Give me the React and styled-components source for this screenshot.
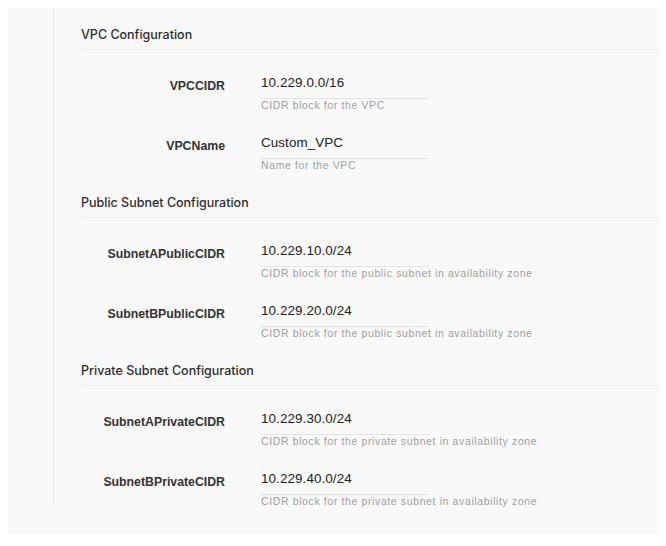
import React from "react";
import styled, { createGlobalStyle } from "styled-components";

const GlobalStyle = createGlobalStyle`
  html, body { margin: 0; padding: 0; background: #ffffff; }
  body { font-family: "Liberation Sans", Arial, sans-serif; -webkit-font-smoothing: antialiased; }
`;

const Page = styled.div`
  padding: 8px 6px 11px 8px;
`;

const Panel = styled.div`
  background: #f9f9f9;
  padding: 0 0 27px 45px;
`;

const Content = styled.div`
  border-left: 1px solid #e6e6e6;
  padding: 19px 0 0 27px;
  display: flex;
  flex-direction: column;
  gap: 24px;
`;

const Section = styled.section`
  display: flex;
  flex-direction: column;
`;

const Header = styled.h3`
  margin: 0;
  font-family: "Inter", "Liberation Sans", sans-serif;
  font-weight: 500;
  font-size: 12.5px;
  line-height: 16px;
  color: #2e2e2e;
  padding-bottom: 6px;
  border-bottom: 1px solid #ececec;
`;

const Rows = styled.div`
  display: flex;
  flex-direction: column;
  gap: 24px;
  padding-top: 25px;
`;

const Row = styled.div`
  display: grid;
  grid-template-columns: 144px 1fr;
  column-gap: 36px;
`;

const Label = styled.div`
  text-align: right;
  font-weight: 700;
  font-size: 12.3px;
  line-height: 16px;
  padding-top: 3px;
  color: #333333;
`;

const Field = styled.div`
  display: flex;
  flex-direction: column;
`;

const Value = styled.div`
  width: 168px;
  font-size: 13.4px;
  letter-spacing: 0.1px;
  line-height: 16px;
  color: #222222;
  padding-bottom: 7px;
  border-bottom: 1px solid #e4e4e4;
`;

const Help = styled.div`
  font-size: 10.5px;
  letter-spacing: 0.62px;
  line-height: 12px;
  color: #a0a0a0;
  white-space: nowrap;
`;

const sections = [
  {
    title: "VPC Configuration",
    rows: [
      { label: "VPCCIDR", value: "10.229.0.0/16", help: "CIDR block for the VPC" },
      { label: "VPCName", value: "Custom_VPC", help: "Name for the VPC" },
    ],
  },
  {
    title: "Public Subnet Configuration",
    rows: [
      { label: "SubnetAPublicCIDR", value: "10.229.10.0/24", help: "CIDR block for the public subnet in availability zone" },
      { label: "SubnetBPublicCIDR", value: "10.229.20.0/24", help: "CIDR block for the public subnet in availability zone" },
    ],
  },
  {
    title: "Private Subnet Configuration",
    rows: [
      { label: "SubnetAPrivateCIDR", value: "10.229.30.0/24", help: "CIDR block for the private subnet in availability zone" },
      { label: "SubnetBPrivateCIDR", value: "10.229.40.0/24", help: "CIDR block for the private subnet in availability zone" },
    ],
  },
];

export default function App() {
  return (
    <>
      <GlobalStyle />
      <Page>
        <Panel>
          <Content>
            {sections.map((s) => (
              <Section key={s.title}>
                <Header>{s.title}</Header>
                <Rows>
                  {s.rows.map((r) => (
                    <Row key={r.label}>
                      <Label>{r.label}</Label>
                      <Field>
                        <Value>{r.value}</Value>
                        <Help>{r.help}</Help>
                      </Field>
                    </Row>
                  ))}
                </Rows>
              </Section>
            ))}
          </Content>
        </Panel>
      </Page>
    </>
  );
}
